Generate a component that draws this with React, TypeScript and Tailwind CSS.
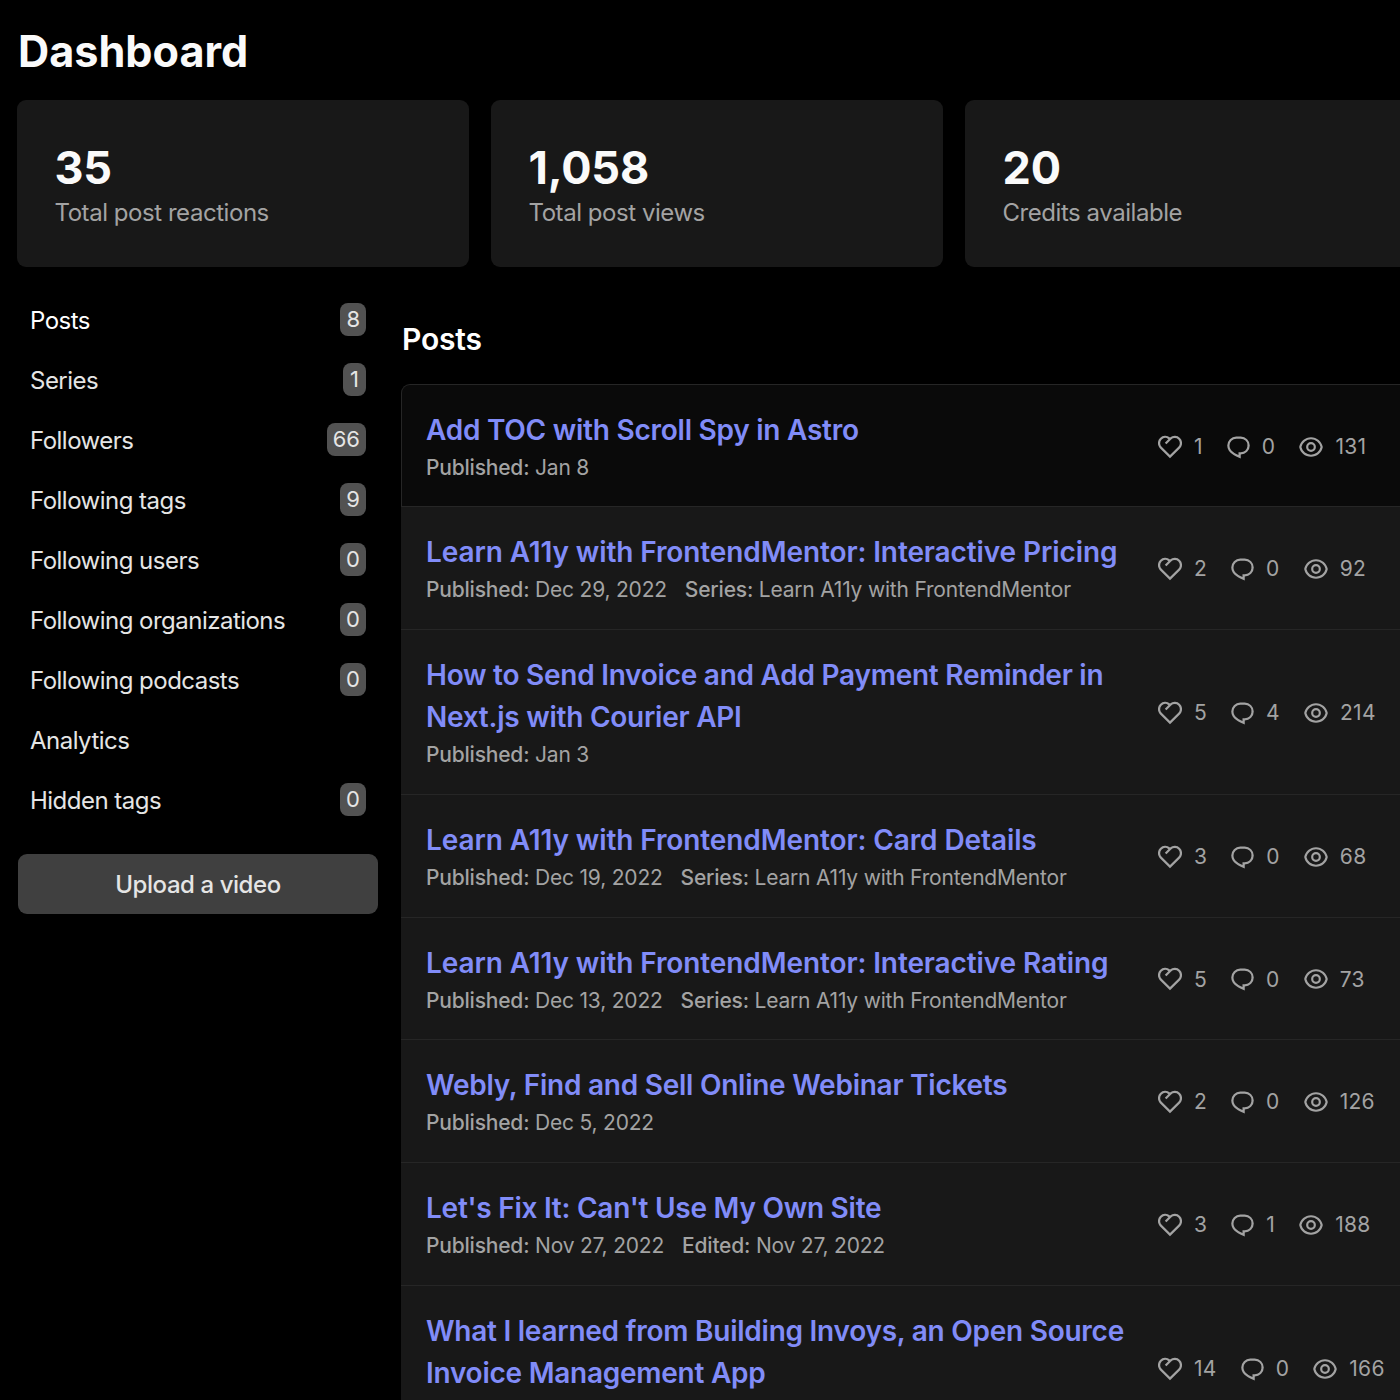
const stats = [
  { value: "35", label: "Total post reactions" },
  { value: "1,058", label: "Total post views" },
  { value: "20", label: "Credits available" },
];

const menu = [
  { label: "Posts", count: "8", active: true },
  { label: "Series", count: "1" },
  { label: "Followers", count: "66" },
  { label: "Following tags", count: "9" },
  { label: "Following users", count: "0" },
  { label: "Following organizations", count: "0" },
  { label: "Following podcasts", count: "0" },
  { label: "Analytics" },
  { label: "Hidden tags", count: "0" },
];

const series = "Learn A11y with FrontendMentor";

const posts = [
  { title: "Add TOC with Scroll Spy in Astro", published: "Jan 8", likes: 1, comments: 0, views: 131 },
  { title: "Learn A11y with FrontendMentor: Interactive Pricing", published: "Dec 29, 2022", series, likes: 2, comments: 0, views: 92 },
  { title: "How to Send Invoice and Add Payment Reminder in Next.js with Courier API", published: "Jan 3", likes: 5, comments: 4, views: 214 },
  { title: "Learn A11y with FrontendMentor: Card Details", published: "Dec 19, 2022", series, likes: 3, comments: 0, views: 68 },
  { title: "Learn A11y with FrontendMentor: Interactive Rating", published: "Dec 13, 2022", series, likes: 5, comments: 0, views: 73 },
  { title: "Webly, Find and Sell Online Webinar Tickets", published: "Dec 5, 2022", likes: 2, comments: 0, views: 126 },
  { title: "Let's Fix It: Can't Use My Own Site", published: "Nov 27, 2022", edited: "Nov 27, 2022", likes: 3, comments: 1, views: 188 },
  { title: "What I learned from Building Invoys, an Open Source Invoice Management App", published: "Jan 1", likes: 14, comments: 0, views: 166 },
];

function HeartIcon() {
  return (
    <svg width="24" height="24" viewBox="4 4 16 16" fill="currentColor" className="shrink-0">
      <path d="M18.884 12.595l.01.011L12 19.5l-6.894-6.894.01-.01A4.875 4.875 0 0112 5.73a4.875 4.875 0 016.884 6.865zM6.431 7.037a3.375 3.375 0 000 4.773L12 17.38l5.569-5.569a3.375 3.375 0 10-4.773-4.773L9.613 10.22l-1.06-1.062 2.371-2.372a3.375 3.375 0 00-4.492.25v.001z" />
    </svg>
  );
}

function CommentIcon() {
  return (
    <svg width="23" height="24" viewBox="4.5 4 15 16" fill="currentColor" className="shrink-0">
      <path d="M10.5 5h3a6 6 0 110 12v2.625c-3.75-1.5-9-3.75-9-8.625a6 6 0 016-6zM12 15.5h1.5a4.501 4.501 0 001.722-8.657A4.5 4.5 0 0013.5 6.5h-3A4.5 4.5 0 006 11c0 2.707 1.846 4.475 6 6.36V15.5z" />
    </svg>
  );
}

function EyeIcon() {
  return (
    <svg width="24" height="20" viewBox="1 3 22 18" fill="currentColor" className="shrink-0">
      <path d="M12 3c5.392 0 9.878 3.88 10.819 9-.94 5.12-5.427 9-10.819 9-5.392 0-9.878-3.88-10.819-9C2.121 6.88 6.608 3 12 3zm0 16a9.005 9.005 0 008.777-7 9.005 9.005 0 00-17.554 0A9.005 9.005 0 0012 19zm0-2.5a4.5 4.5 0 110-9 4.5 4.5 0 010 9zm0-2a2.5 2.5 0 100-5 2.5 2.5 0 000 5z" />
    </svg>
  );
}

function Meta({ label, value }: { label: string; value: string }) {
  return (
    <span>
      <span className="font-medium">{label}:</span> {value}
    </span>
  );
}

export default function App() {
  return (
    <div className="w-[1400px] h-[1400px] overflow-hidden bg-black text-[#fafafa] font-['Inter',sans-serif]">
      <h1 className="h-[100px] pl-[18px] pt-[23px] text-[43.2px] leading-[56px] font-bold">Dashboard</h1>

      <div className="flex gap-[21.5px] pl-[16.5px]">
        {stats.map((stat) => (
          <div key={stat.label} className="w-[452.5px] h-[167px] shrink-0 rounded-[9px] bg-[#181818] pl-[38px] pt-[43px]">
            <div className="text-[45px] leading-[50px] tracking-[-0.2px] font-bold">{stat.value}</div>
            <div className="text-[24px] leading-[40px] tracking-[-0.45px] text-[#a3a3a3]">{stat.label}</div>
          </div>
        ))}
      </div>

      <div className="flex gap-[23px] pl-[18px] pt-[23px]">
        <aside className="w-[360px] shrink-0">
          <nav className="flex flex-col">
            {menu.map((item) => (
              <div
                key={item.label}
                className={`h-[60px] flex items-center justify-between px-[12px] text-[24px] ${item.active ? "text-white" : "text-[#e5e5e5]"}`}
              >
                <span className="pt-[2px] tracking-[-0.52px]">{item.label}</span>
                {item.count && (
                  <span className="-mt-[1px] h-[33px] min-w-[23px] px-[6px] flex items-center justify-center rounded-[8px] bg-[#525252] text-[22px] text-[#e5e5e5]">
                    {item.count}
                  </span>
                )}
              </div>
            ))}
          </nav>
          <button className="mt-[24px] pt-[2px] w-full h-[60px] rounded-[9px] bg-[#404040] text-[24px] tracking-[-0.43px] font-medium text-[#e5e5e5]">
            Upload a video
          </button>
        </aside>

        <main className="flex-1">
          <h2 className="h-[94px] pt-[28px] pl-[1px] text-[30px] leading-[42px] tracking-[-0.2px] font-semibold text-white">Posts</h2>
          <div className="flex flex-col">
            {posts.map((post, i) => (
              <div
                key={post.title}
                className={`flex items-center border-b border-[#262626] ${i === 0 ? "bg-[#0a0a0a] rounded-tl-[9px] border-l border-t pt-[24px] pb-[23px] pl-[24px]" : "bg-[#181818] pt-[24px] pb-[24px] pl-[25px]"}`}
              >
                <div className="w-[712px] shrink-0 mr-[20px]">
                  <div className={`text-[28px] leading-[42.5px] font-semibold text-[#818cf8] ${post.title.includes("A11y") ? "tracking-[-0.1px]" : "tracking-[-0.25px]"}`}>
                    {post.title}
                  </div>
                  <div className="flex gap-[18px] mt-[1.5px] text-[21px] leading-[29.75px] tracking-[-0.2px] text-[#a3a3a3]">
                    <Meta label="Published" value={post.published} />
                    {post.series && <Meta label="Series" value={post.series} />}
                    {post.edited && <Meta label="Edited" value={post.edited} />}
                  </div>
                </div>
                <div className="flex items-center gap-[24px] pt-[2px] text-[21px] tracking-[0.3px] text-[#a3a3a3]">
                  <div className="flex items-center gap-[12px]"><HeartIcon /><span>{post.likes}</span></div>
                  <div className="flex items-center gap-[12px]"><CommentIcon /><span>{post.comments}</span></div>
                  <div className="flex items-center gap-[12px]"><EyeIcon /><span>{post.views}</span></div>
                </div>
              </div>
            ))}
          </div>
        </main>
      </div>
    </div>
  );
}
